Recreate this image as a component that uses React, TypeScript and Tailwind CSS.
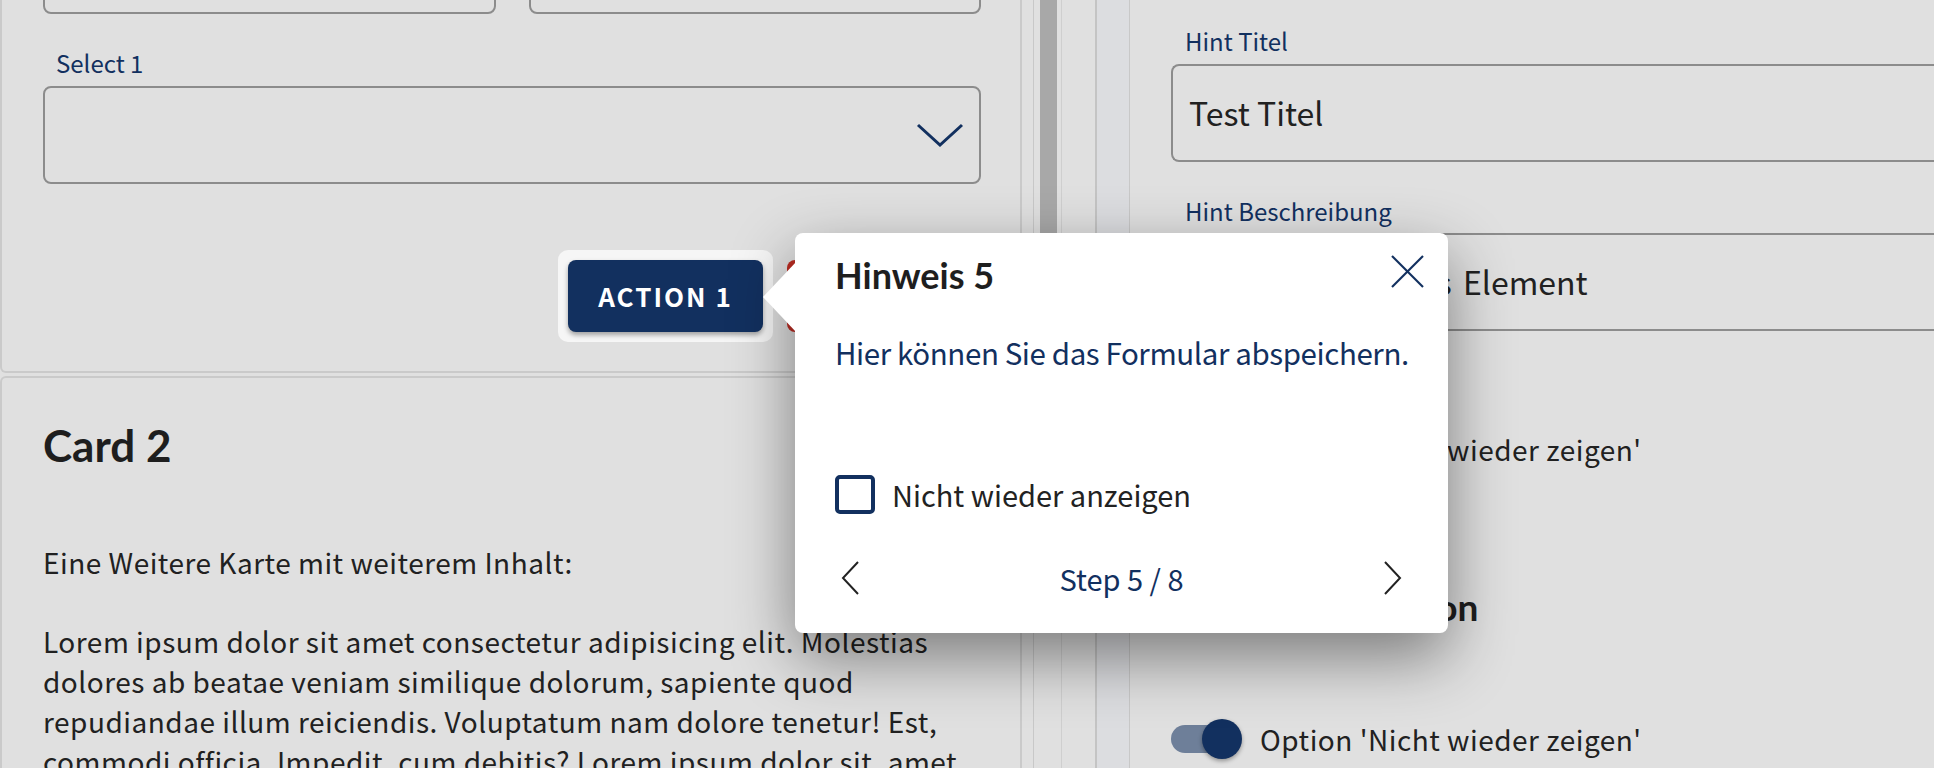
import React from 'react';

const navy = 'text-[#12305f]';
const heading = "font-['Lato',sans-serif] font-bold text-[#1e1e1e]";

function Toggle() {
  return (
    <div className="relative flex h-[40px] w-[71px] shrink-0 items-center">
      <div className="h-[28px] w-[62px] rounded-full bg-[#6e7f99]" />
      <div className="absolute right-0 top-0 h-[40px] w-[40px] rounded-full bg-[#12305f] shadow-[0_2px_4px_rgba(0,0,0,0.35)]" />
    </div>
  );
}

function ChevronLeft() {
  return (
    <svg width="18" height="34" viewBox="0 0 18 34" fill="none">
      <polyline points="17,1 2,17 17,33" stroke="#222" strokeWidth="2" />
    </svg>
  );
}

function ChevronRight() {
  return (
    <svg width="18" height="34" viewBox="0 0 18 34" fill="none">
      <polyline points="1,1 16,17 1,33" stroke="#222" strokeWidth="2" />
    </svg>
  );
}

export default function App() {
  return (
    <div className="relative h-[768px] w-[1934px] overflow-hidden bg-[#e0e0e0] font-['Noto_Sans_CJK_SC',sans-serif] text-[#212121]">
      <div className="flex h-full">
        {/* left pane */}
        <div className="flex w-[1022px] shrink-0 flex-col">
          <div className="rounded-b-[6px] border-2 border-t-0 border-[#cacaca] pl-[41px] pr-[39px] pb-[39px]">
            <div className="-mt-[84px] grid grid-cols-2 gap-[33px]">
              <div className="h-[98px] rounded-[8px] border-2 border-[#8c8c8c]" />
              <div className="h-[98px] rounded-[8px] border-2 border-[#8c8c8c]" />
            </div>
            <div className={`mt-[33px] pl-[13px] text-[24px] leading-[32px] ${navy}`}>Select 1</div>
            <div className="mt-[7px] flex h-[98px] items-center justify-end rounded-[8px] border-2 border-[#8c8c8c] pr-[15px]">
              <svg width="48" height="24" viewBox="0 0 48 24" fill="none">
                <polyline points="2,2 24,22 46,2" stroke="#12305f" strokeWidth="3" />
              </svg>
            </div>
            <div className="mt-[76px] flex justify-end">
              <div className="-m-[10px] rounded-[10px] bg-[#f6f6f6] p-[10px]">
                <button className="flex h-[72px] w-[195px] items-center justify-center rounded-[8px] bg-[#12305f] pb-[2px] text-[26px] font-bold tracking-[2px] text-white shadow-[0_3px_5px_rgba(0,0,0,0.35)]">
                  ACTION 1
                </button>
              </div>
              <button className="ml-[24px] flex h-[72px] w-[194px] items-center justify-center rounded-[8px] bg-[#bd2d24] text-[26px] font-bold tracking-[2px] text-white">
                ACTION 2
              </button>
            </div>
          </div>
          <div className="mt-[3px] flex-1 rounded-t-[6px] border-2 border-b-0 border-[#cacaca] pl-[41px] pr-[39px] pt-[39px]">
            <h2 className={`text-[44px] leading-[56px] ${heading}`}>Card 2</h2>
            <p className="mt-[69px] text-[28px] leading-[40px] tracking-[0.5px]">Eine Weitere Karte mit weiterem Inhalt:</p>
            <p className="mt-[39px] text-[28px] leading-[40px] tracking-[0.5px]">
              Lorem ipsum dolor sit amet consectetur adipisicing elit. Molestias dolores ab beatae veniam similique dolorum,
              sapiente quod repudiandae illum reiciendis. Voluptatum nam dolore tenetur! Est, commodi officia. Impedit, cum
              debitis? Lorem ipsum dolor sit, amet consectetur adipisicing elit.
            </p>
          </div>
        </div>

        {/* splitter */}
        <div className="w-[11px] shrink-0" />
        <div className="w-px shrink-0 bg-[#c8c8c8]" />
        <div className="w-[6px] shrink-0" />
        <div className="flex w-[17px] shrink-0 flex-col">
          <div className="h-[420px] bg-[#a8a8a8]" />
        </div>
        <div className="w-[4px] shrink-0" />
        <div className="w-px shrink-0 bg-[#cfcfcf]" />
        <div className="w-[33px] shrink-0" />
        <div className="w-[2px] shrink-0 bg-[#c4c4c4]" />
        <div className="w-[32px] shrink-0 bg-[#dcdde0]" />
        <div className="w-px shrink-0 bg-[#c8c8c8]" />

        {/* right pane */}
        <div className="flex min-w-0 flex-1 flex-col pl-[41px]">
          <div className={`mt-[25px] pl-[14px] text-[24px] leading-[32px] ${navy}`}>Hint Titel</div>
          <div className="mt-[7px] flex h-[98px] w-[840px] items-center rounded-l-[8px] border-2 border-r-0 border-[#8c8c8c] pb-[2px] pl-[16px] text-[32px] leading-[40px]">
            Test Titel
          </div>
          <div className={`mt-[33px] pl-[14px] text-[24px] leading-[32px] ${navy}`}>Hint Beschreibung</div>
          <div className="mt-[6px] flex h-[98px] w-[840px] items-center rounded-l-[8px] border-2 border-r-0 border-[#8c8c8c] pb-[2px] pl-[16px] text-[32px] leading-[40px] [word-spacing:4px]">
            Erklärung für das Element
          </div>
          <div className="mt-[98px] flex items-center gap-[18px]">
            <Toggle />
            <span className="text-[28px] leading-[40px] tracking-[0.5px]">Option 'Nicht wieder zeigen'</span>
          </div>
          <h3 className={`mt-[114px] text-[37px] leading-[48px] ${heading}`}>Hint Konfiguration</h3>
          <div className="mt-[88px] flex items-center gap-[18px]">
            <Toggle />
            <span className="text-[28px] leading-[40px] tracking-[0.5px]">Option 'Nicht wieder zeigen'</span>
          </div>
        </div>
      </div>

      {/* hint popup */}
      <div className="absolute left-[795px] top-[233px] flex h-[400px] w-[653px] flex-col rounded-[8px] bg-white px-[40px] pt-[18px] shadow-[0_24px_64px_rgba(0,0,0,0.45)]">
        <svg className="absolute -left-[32px] top-[29px]" width="33" height="70" viewBox="0 0 33 70">
          <polygon points="33,0 0,35 33,70" fill="#fff" />
        </svg>
        <button className="absolute right-[24px] top-[22px]">
          <svg width="33" height="33" viewBox="0 0 33 33" fill="none">
            <line x1="1" y1="1" x2="32" y2="32" stroke="#12305f" strokeWidth="2.2" />
            <line x1="32" y1="1" x2="1" y2="32" stroke="#12305f" strokeWidth="2.2" />
          </svg>
        </button>
        <h3 className={`text-[36px] leading-[48px] ${heading}`}>Hinweis 5</h3>
        <p className={`mt-[33px] whitespace-nowrap text-[29.5px] leading-[40px] tracking-[-0.4px] ${navy}`}>Hier können Sie das Formular abspeichern.</p>
        <label className="mt-[102px] flex h-[40px] items-center gap-[17px]">
          <span className="h-[39px] w-[40px] rounded-[5px] border-[4px] border-[#12305f]" />
          <span className="text-[29px] leading-[40px] text-[#222]">Nicht wieder anzeigen</span>
        </label>
        <div className="mt-[44px] flex h-[40px] items-center justify-between px-[6px]">
          <button><ChevronLeft /></button>
          <span className={`text-[29px] leading-[40px] ${navy}`}>Step 5 / 8</span>
          <button><ChevronRight /></button>
        </div>
      </div>
    </div>
  );
}
